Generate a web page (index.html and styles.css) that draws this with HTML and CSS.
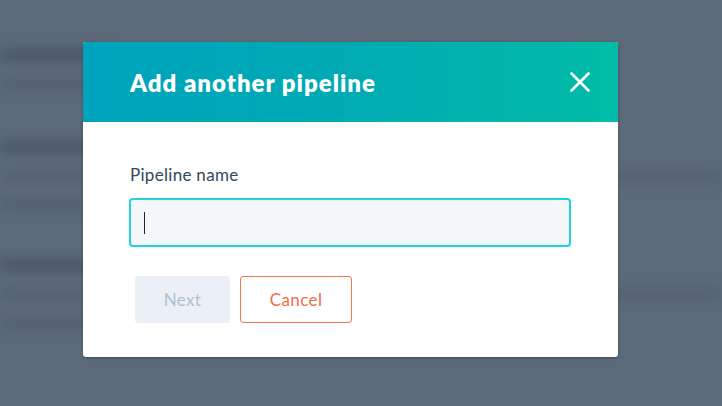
FILE: index.html
```html
<!DOCTYPE html>
<html lang="en">
<head>
<meta charset="utf-8">
<title>Add another pipeline</title>
<link rel="stylesheet" href="styles.css">
</head>
<body>
<div class="page">
  <div class="section s1">
    <div class="bar title"></div>
    <div class="bar text short"></div>
  </div>
  <div class="section s2">
    <div class="bar title"></div>
    <div class="bar text long"></div>
    <div class="bar text mid"></div>
  </div>
  <div class="section s3">
    <div class="bar title"></div>
    <div class="bar text long"></div>
    <div class="bar text mid"></div>
  </div>
</div>
<div class="modal" role="dialog" aria-labelledby="modal-title">
  <div class="modal-header">
    <h1 id="modal-title" class="modal-title">Add another pipeline</h1>
    <button class="close" aria-label="Close">
      <svg width="20" height="20" viewBox="0 0 20 20"><path d="M1.5 1.5 L18.5 18.5 M18.5 1.5 L1.5 18.5" stroke="#ffffff" stroke-width="2.6" stroke-linecap="round" fill="none"/></svg>
    </button>
  </div>
  <div class="modal-body">
    <label class="label" for="pname">Pipeline name</label>
    <div class="input"><span class="caret"></span></div>
    <div class="actions">
      <button class="btn btn-next">Next</button>
      <button class="btn btn-cancel">Cancel</button>
    </div>
  </div>
</div>
</body>
</html>
```
FILE: styles.css
```css
html, body {
  margin: 0;
  padding: 0;
}
body {
  width: 722px;
  height: 406px;
  overflow: hidden;
  background: #5c6979;
  font-family: Lato, "Noto Sans", "Liberation Sans", sans-serif;
  position: relative;
}
.page {
  filter: blur(6px);
  padding-top: 50px;
  display: flex;
  flex-direction: column;
}
.section {
  display: flex;
  flex-direction: column;
  gap: 20px;
}
.s2 { margin-top: 53px; }
.s3 { margin-top: 50px; }
.bar {
  height: 10px;
  border-radius: 5px;
}
.title {
  width: 120px;
  background: #475466;
}
.text {
  background: #536072;
  height: 9px;
}
.short { width: 100px; }
.long { width: 722px; }
.mid { width: 120px; }

.modal {
  position: absolute;
  left: 83px;
  top: 42px;
  width: 535px;
  background: #ffffff;
  border-radius: 3px;
  overflow: hidden;
  box-shadow: 0 1px 3px rgba(30, 40, 55, 0.45);
}
.modal-header {
  height: 80px;
  background: linear-gradient(90deg, #00a3bc 0%, #00abb4 50%, #00bca6 100%);
  display: flex;
  align-items: center;
  justify-content: space-between;
  padding: 0 28px 0 47px;
}
.modal-title {
  margin: 0;
  color: #ffffff;
  font-family: Lato, "Noto Sans", sans-serif;
  font-weight: 800;
  font-size: 24px;
  letter-spacing: 1px;
  line-height: 30px;
  padding-top: 2px;
}
.close {
  background: none;
  border: 0;
  padding: 0;
  width: 20px;
  height: 20px;
  display: flex;
  margin-top: -1px;
}
.modal-body {
  padding: 41px 46px 34px 46px;
  display: flex;
  flex-direction: column;
}
.label {
  color: #33475b;
  font-size: 17px;
  letter-spacing: 0.3px;
  line-height: 24px;
  margin-left: 1px;
  margin-bottom: 11px;
}
.input {
  height: 45px;
  border: 2px solid #1fd1e1;
  border-radius: 4px;
  background: #f5f8fa;
  display: flex;
  align-items: center;
  padding-left: 13px;
  box-sizing: content-box;
  width: 425px;
}
.caret {
  width: 1px;
  height: 22px;
  background: #1c2530;
}
.actions {
  display: flex;
  gap: 10px;
  margin-top: 29px;
  margin-left: 6px;
}
.btn {
  height: 47px;
  border-radius: 3px;
  font-family: Lato, "Noto Sans", sans-serif;
  font-size: 17px;
  letter-spacing: 0.4px;
  padding: 0;
  box-sizing: border-box;
}
.btn-next {
  width: 95px;
  background: #eaf0f6;
  border: 1px solid #eaf0f6;
  color: #b0c1d4;
}
.btn-cancel {
  width: 112px;
  background: #ffffff;
  border: 1px solid #f2754f;
  color: #ef6b49;
}
```
